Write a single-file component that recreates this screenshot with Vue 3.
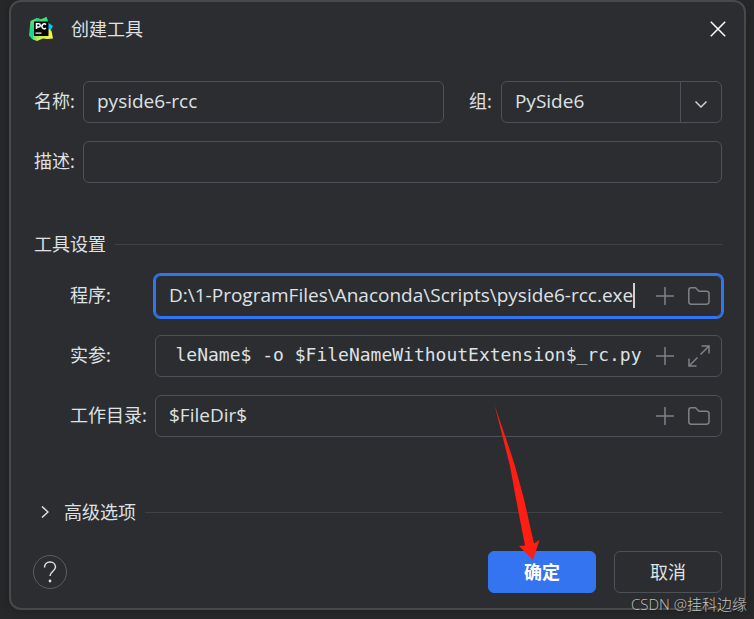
<script setup>
import { nextTick, onMounted, ref } from 'vue'

const name = ref('pyside6-rcc')
const group = ref('PySide6')
const description = ref('')
const program = ref('D:\\1-ProgramFiles\\Anaconda\\Scripts\\pyside6-rcc.exe')
const args = ref('$FileName$ -o $FileNameWithoutExtension$_rc.py')
const workdir = ref('$FileDir$')
const argsInput = ref(null)

// Keep the end of the long argument string in view.
onMounted(async () => {
  await nextTick()
  argsInput.value.scrollLeft = argsInput.value.scrollWidth
})
</script>

<template>
  <main class="desktop">
    <form class="dialog" @submit.prevent>
      <header class="titlebar">
        <svg class="logo" viewBox="0 0 24 24" aria-hidden="true">
          <defs>
            <linearGradient id="lg-left" x1="0" y1="0" x2="0.3" y2="1">
              <stop offset="0" stop-color="#8be85c" />
              <stop offset="0.5" stop-color="#21d789" />
              <stop offset="1" stop-color="#1fd08f" />
            </linearGradient>
            <linearGradient id="lg-bottom" x1="0" y1="0.2" x2="1" y2="0.5">
              <stop offset="0" stop-color="#3bdc7c" />
              <stop offset="0.45" stop-color="#c9ee4d" />
              <stop offset="1" stop-color="#fcf84a" />
            </linearGradient>
          </defs>
          <path d="M1.500 4 8 1l4 1.200L17.500 0l1.500 5v12L8 23.500 3 22 0 18.500z" fill="url(#lg-left)" />
          <path d="M8 1l4 1.200L9 6 4 8z" fill="#12cf9d" />
          <path d="M17.500 0 19 5l-9 .5z" fill="#35e07c" />
          <path d="M19 5.500 24 9l-2.500 4.500L18 15z" fill="#07c3f2" />
          <path d="M4 18 20 12l2.500 2L24 21.500 18 22l-4-.5L8 24 4 22.500z" fill="url(#lg-bottom)" />
          <rect x="5" y="4.500" width="14.500" height="14.500" fill="#050805" />
          <g fill="none" stroke="#fff" stroke-width="1.500">
            <path d="M7.500 12V6.800h2.200a1.500 1.500 0 0 1 0 3.200H7.500" />
            <path d="M17 7.600a2.400 2.400 0 1 0 0 3.400" />
          </g>
          <rect x="6.500" y="15.500" width="6" height="1.200" fill="#fff" />
        </svg>
        <h1 class="title">创建工具</h1>
        <button class="close" type="button" aria-label="关闭">
          <svg viewBox="0 0 16 16" width="16" height="16"><path d="M.8.8l14.400 14.400M15.200.8L.8 15.200" /></svg>
        </button>
      </header>

      <div class="general">
        <label for="name">名称:</label>
        <div class="row">
          <div class="field"><input id="name" v-model="name" type="text" /></div>
          <label class="group-label" for="group">组:</label>
          <div class="field combo">
            <select id="group" v-model="group">
              <option>PySide6</option>
            </select>
            <span class="arrow">
              <svg viewBox="0 0 12 8" width="12" height="8"><path d="M.5 1.500L6 7l5.500-5.500" /></svg>
            </span>
          </div>
        </div>
        <label for="description">描述:</label>
        <div class="field"><input id="description" v-model="description" type="text" /></div>
      </div>

      <h2 class="section">工具设置</h2>

      <div class="settings">
        <label for="program">程序:</label>
        <div class="field active">
          <div class="editing">
            <input id="program" v-model="program" class="fit" type="text" />
            <span class="caret"></span>
          </div>
          <button class="tool" type="button" aria-label="插入宏">
            <svg viewBox="0 0 18 18" width="18" height="18"><path d="M9 0v18M0 9h18" /></svg>
          </button>
          <button class="tool" type="button" aria-label="浏览">
            <svg viewBox="0 0 22 18" width="22" height="18"><path d="M.8 3.200a2.400 2.400 0 0 1 2.400-2.400h4.300l3.500 3.400h7.600a2.400 2.400 0 0 1 2.400 2.400v8.200a2.400 2.400 0 0 1-2.400 2.400H3.200a2.400 2.400 0 0 1-2.400-2.400z" /></svg>
          </button>
        </div>

        <label for="args">实参:</label>
        <div class="field">
          <input id="args" ref="argsInput" v-model="args" class="mono" type="text" />
          <button class="tool" type="button" aria-label="插入宏">
            <svg viewBox="0 0 18 18" width="18" height="18"><path d="M9 0v18M0 9h18" /></svg>
          </button>
          <button class="tool" type="button" aria-label="展开">
            <svg viewBox="0 0 22 22" width="22" height="22"><path d="M13.500 1h7.500v7.500M21 1l-8.500 8.500M1 13.500V21h7.500M1 21l8.500-8.500" /></svg>
          </button>
        </div>

        <label for="workdir">工作目录:</label>
        <div class="field">
          <input id="workdir" v-model="workdir" type="text" />
          <button class="tool" type="button" aria-label="插入宏">
            <svg viewBox="0 0 18 18" width="18" height="18"><path d="M9 0v18M0 9h18" /></svg>
          </button>
          <button class="tool" type="button" aria-label="浏览">
            <svg viewBox="0 0 22 18" width="22" height="18"><path d="M.8 3.200a2.400 2.400 0 0 1 2.400-2.400h4.300l3.500 3.400h7.600a2.400 2.400 0 0 1 2.400 2.400v8.200a2.400 2.400 0 0 1-2.400 2.400H3.200a2.400 2.400 0 0 1-2.400-2.400z" /></svg>
          </button>
        </div>
      </div>

      <button class="section advanced" type="button" aria-expanded="false">
        <svg viewBox="0 0 8 12" width="8" height="12"><path d="M1 0.500l6 5.500-6 5.500" /></svg>
        高级选项
      </button>

      <footer class="actions">
        <button class="help" type="button" aria-label="帮助">
          <svg viewBox="0 0 14 22" width="14" height="22">
            <path d="M1.500 6.500C1.500 3.300 3.800 1 7 1s5.500 2.200 5.500 5.100c0 4.100-5.500 4.300-5.500 9" />
            <circle cx="7" cy="20" r="1.400" />
          </svg>
        </button>
        <div class="confirm">
          <button class="btn primary" type="submit">确定</button>
          <svg class="pointer" viewBox="0 0 46 156" aria-hidden="true">
            <path d="M.5 1Q15 43 21 62L30 95 40 139.500 45.500 136 39 156 25 142l6-.5L22 95 16 62Q10 38 .5 1z" />
          </svg>
        </div>
        <button class="btn" type="button">取消</button>
      </footer>
    </form>
    <span class="watermark">CSDN @挂科边缘</span>
  </main>
</template>

<style>
body {
  background: #27282a;
}
</style>

<style scoped>
.desktop {
  position: relative;
  box-sizing: border-box;
  min-height: 100vh;
  padding: 0 8px 9px 9px;
  color: #dfe1e5;
  font: 18px/24px "Noto Sans", "Noto Sans CJK SC", sans-serif;
}

.dialog {
  box-sizing: border-box;
  padding: 9px 22px 15px 22px;
  border: 2px solid #48494b;
  border-radius: 12px;
  background: #2b2d30;
  box-shadow: 0 0 8px #1e1f21;
}

button,
input,
select {
  margin: 0;
  padding: 0;
  border: 0;
  outline: 0;
  background: none;
  color: inherit;
  font: inherit;
}

svg {
  display: block;
  flex: none;
  fill: none;
  stroke: currentColor;
  stroke-width: 1.5;
}

.titlebar {
  display: flex;
  align-items: center;
  height: 36px;
}

.logo {
  width: 24px;
  height: 24px;
  margin: 0 18px 0 -4px;
  stroke: none;
}

.title {
  flex: 1;
  margin: 0;
  font-size: 18px;
  font-weight: 400;
}

.close {
  margin-right: -12px;
  padding: 8px;
  color: #fff;
}

.general,
.settings {
  display: grid;
  grid-template-columns: 40px 1fr;
  align-items: center;
  gap: 18px 9px;
}

.general {
  padding: 34px 0 0 1px;
}

.settings {
  grid-template-columns: 76px 1fr;
  padding: 19px 0 0 37px;
}

label {
  padding-bottom: 2px;
  white-space: nowrap;
}

.row {
  display: grid;
  grid-template-columns: 361fr auto 221fr;
  align-items: center;
}

.field {
  display: flex;
  align-items: center;
  box-sizing: border-box;
  height: 42px;
  min-width: 0;
  padding: 0 11px 0 13px;
  border: 1px solid #4e5157;
  border-radius: 6px;
  font-family: "Open Sans", "Noto Sans CJK SC", sans-serif;
  font-size: 19px;
}

.field input {
  flex: 1;
  min-width: 0;
  width: 0;
  padding-bottom: 2px;
}

.field.active {
  border-color: #3574f0;
  box-shadow: 0 0 0 2px #3574f0;
}

.group-label {
  margin: 0 9px 0 25px;
}

.combo {
  display: grid;
  grid-template-columns: 1fr 41px;
  align-items: stretch;
  padding: 0;
}

.combo select {
  grid-area: 1 / 1 / 2 / 3;
  padding: 0 52px 2px 13px;
  appearance: none;
}

.combo option {
  background: #2b2d30;
}

.arrow {
  display: grid;
  grid-area: 1 / 2;
  place-items: center;
  padding-top: 4px;
  border-left: 1px solid #4e5157;
  color: #ced0d6;
  pointer-events: none;
}

.editing {
  display: flex;
  flex: 1;
  align-items: center;
  min-width: 0;
}

.editing .fit {
  flex: 0 1 auto;
  width: auto;
  field-sizing: content;
}

.caret {
  flex: none;
  width: 2px;
  height: 25px;
  margin-bottom: 2px;
  background: #ced0d6;
}

.field .mono {
  margin-left: 6px;
  font-family: "DejaVu Sans Mono", monospace;
  font-size: 18px;
}

.tool {
  margin-left: 14px;
  color: #7f8187;
}

.section {
  display: flex;
  align-items: center;
  gap: 9px;
  width: 100%;
  margin: 49px 0 0;
  padding-left: 1px;
  box-sizing: border-box;
  font-size: 18px;
  font-weight: 400;
}

.section::after {
  flex: 1;
  height: 1px;
  background: #3f4145;
  content: "";
}

.advanced {
  gap: 9px;
  margin-top: 63px;
  padding-left: 8px;
}

.advanced svg {
  margin-right: 6px;
}

.actions {
  display: flex;
  align-items: center;
  gap: 18px;
  margin-top: 27px;
}

.help {
  display: grid;
  place-items: center;
  box-sizing: border-box;
  width: 34px;
  height: 34px;
  margin-right: auto;
  border: 1px solid #5a5d63;
  border-radius: 50%;
}

.help circle {
  fill: currentColor;
  stroke: none;
}

.confirm {
  position: relative;
}

.btn {
  box-sizing: border-box;
  width: 108px;
  height: 42px;
  border: 1px solid #4e5157;
  border-radius: 6px;
}

.primary {
  border-color: #3574f0;
  background: #3574f0;
  color: #fff;
  font-weight: 700;
}

.pointer {
  position: absolute;
  bottom: 33px;
  left: 6px;
  width: 46px;
  height: 156px;
  fill: #ff1e12;
  stroke: none;
  pointer-events: none;
}

.watermark {
  position: absolute;
  right: 7px;
  bottom: 5px;
  color: #c4c4c5;
  font: 300 15px/20px "Open Sans", "Noto Sans CJK SC", sans-serif;
  text-shadow: 1px 1px 1px #1e1f22;
}
</style>
